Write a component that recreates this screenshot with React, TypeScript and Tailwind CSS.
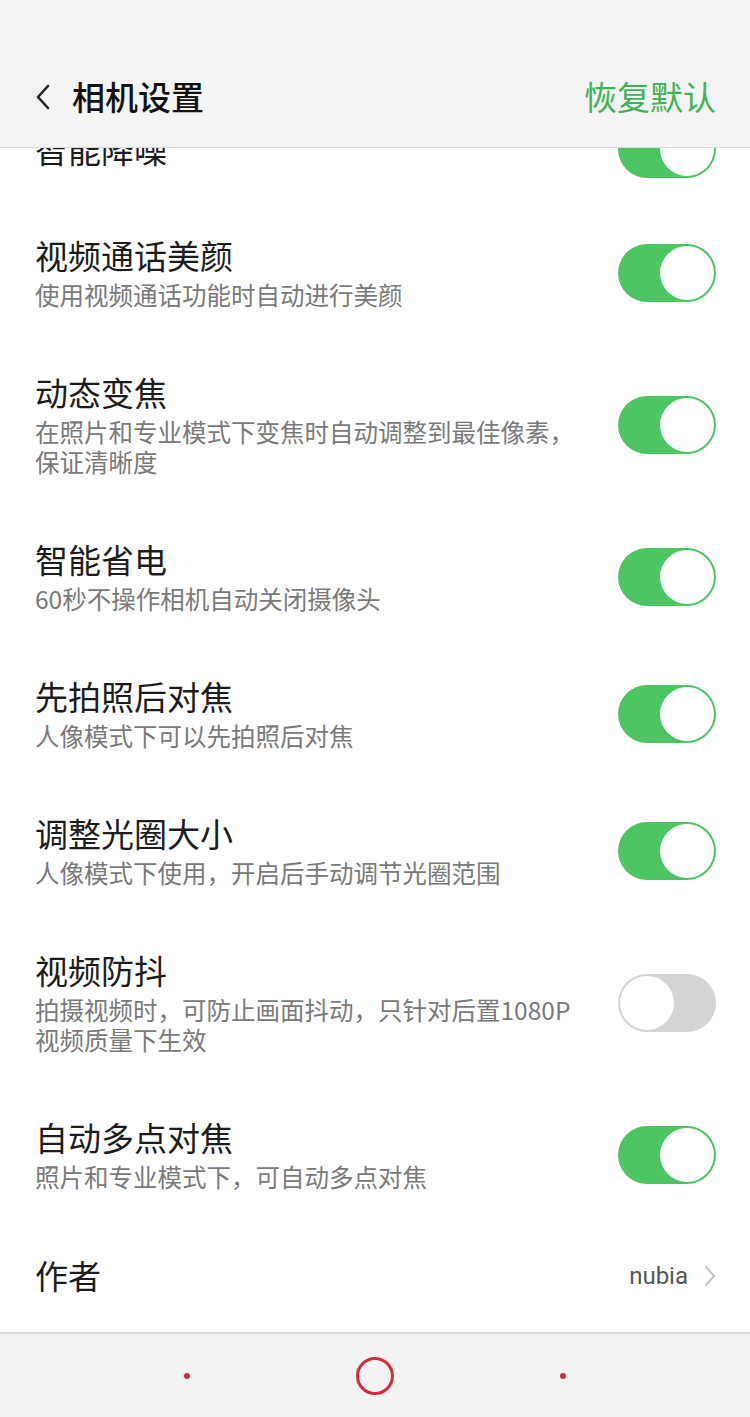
const cjk = "font-['Noto_Sans_CJK_SC','Noto_Sans',sans-serif]";

type Setting = { title: string; desc?: string[]; on: boolean };

const settings: Setting[] = [
  { title: '视频通话美颜', desc: ['使用视频通话功能时自动进行美颜'], on: true },
  { title: '动态变焦', desc: ['在照片和专业模式下变焦时自动调整到最佳像素，', '保证清晰度'], on: true },
  { title: '智能省电', desc: ['60秒不操作相机自动关闭摄像头'], on: true },
  { title: '先拍照后对焦', desc: ['人像模式下可以先拍照后对焦'], on: true },
  { title: '调整光圈大小', desc: ['人像模式下使用，开启后手动调节光圈范围'], on: true },
  { title: '视频防抖', desc: ['拍摄视频时，可防止画面抖动，只针对后置1080P', '视频质量下生效'], on: false },
  { title: '自动多点对焦', desc: ['照片和专业模式下，可自动多点对焦'], on: true },
];

function Toggle({ on }: { on: boolean }) {
  return (
    <div
      className={`w-[98px] h-[58px] rounded-full p-[2px] flex shrink-0 ${
        on ? 'bg-[#4dc562] justify-end' : 'bg-[#d4d4d4] justify-start'
      }`}
    >
      <div className="w-[54px] h-[54px] rounded-full bg-white" />
    </div>
  );
}

function Row({ s, last }: { s: Setting; last?: string }) {
  return (
    <div className={`flex items-center justify-between pl-[35px] pr-[34px] pt-[34px] ${last ?? 'pb-[28px]'}`}>
      <div className="flex flex-col">
        <div className="text-[33px] leading-[40px] text-[#1c1c1c]">{s.title}</div>
        {s.desc && (
          <div className="mt-[5px] text-[24.5px] leading-[30px] text-[#7a7a7a]">
            {s.desc.map(line => (
              <div key={line}>{line}</div>
            ))}
          </div>
        )}
      </div>
      <Toggle on={s.on} />
    </div>
  );
}

export default function App() {
  return (
    <div className={`w-[750px] h-[1417px] flex flex-col bg-white ${cjk}`}>
      <header className="h-[148px] shrink-0 bg-[#f4f4f4] border-b border-[#dadada] pt-[47px] relative z-10">
        <div className="h-[100px] flex items-center justify-between pl-[33px] pr-[34px]">
          <div className="flex items-center gap-[19px]">
            <svg width="20" height="28" viewBox="0 0 20 28" fill="none">
              <path d="M15 3 L5 14 L15 25" stroke="#222" strokeWidth="2.6" strokeLinecap="round" strokeLinejoin="round" />
            </svg>
            <span className="text-[33px] font-medium text-[#111]">相机设置</span>
          </div>
          <span className="text-[33px] text-[#3db553]">恢复默认</span>
        </div>
      </header>

      <div className="flex-1 overflow-hidden">
        <div className="mt-[-62px]">
          <Row s={{ title: '智能降噪', on: true }} last="pb-[23px]" />
          {settings.map(s => (
            <Row key={s.title} s={s} />
          ))}
          <div className="h-[111px] flex items-center justify-between pl-[35px] pr-[34px]">
            <span className="text-[33px] text-[#1c1c1c]">作者</span>
            <div className="flex items-center gap-[16px]">
              <span className="text-[24px] text-[#555] font-['Roboto',sans-serif]">nubia</span>
              <svg width="12" height="22" viewBox="0 0 12 22" fill="none">
                <path d="M2 2 L10 11 L2 20" stroke="#c4c4c4" strokeWidth="2" strokeLinecap="round" strokeLinejoin="round" />
              </svg>
            </div>
          </div>
        </div>
      </div>

      <footer className="h-[85px] shrink-0 bg-[#f3f3f3] border-t-2 border-[#dcdcdc] flex items-center justify-center gap-[166px]">
        <div className="w-[6px] h-[6px] rounded-full bg-[#d42c3a]" />
        <div className="w-[38px] h-[38px] rounded-full border-[3.5px] border-[#d42c3a]" />
        <div className="w-[6px] h-[6px] rounded-full bg-[#d42c3a]" />
      </footer>
    </div>
  );
}
